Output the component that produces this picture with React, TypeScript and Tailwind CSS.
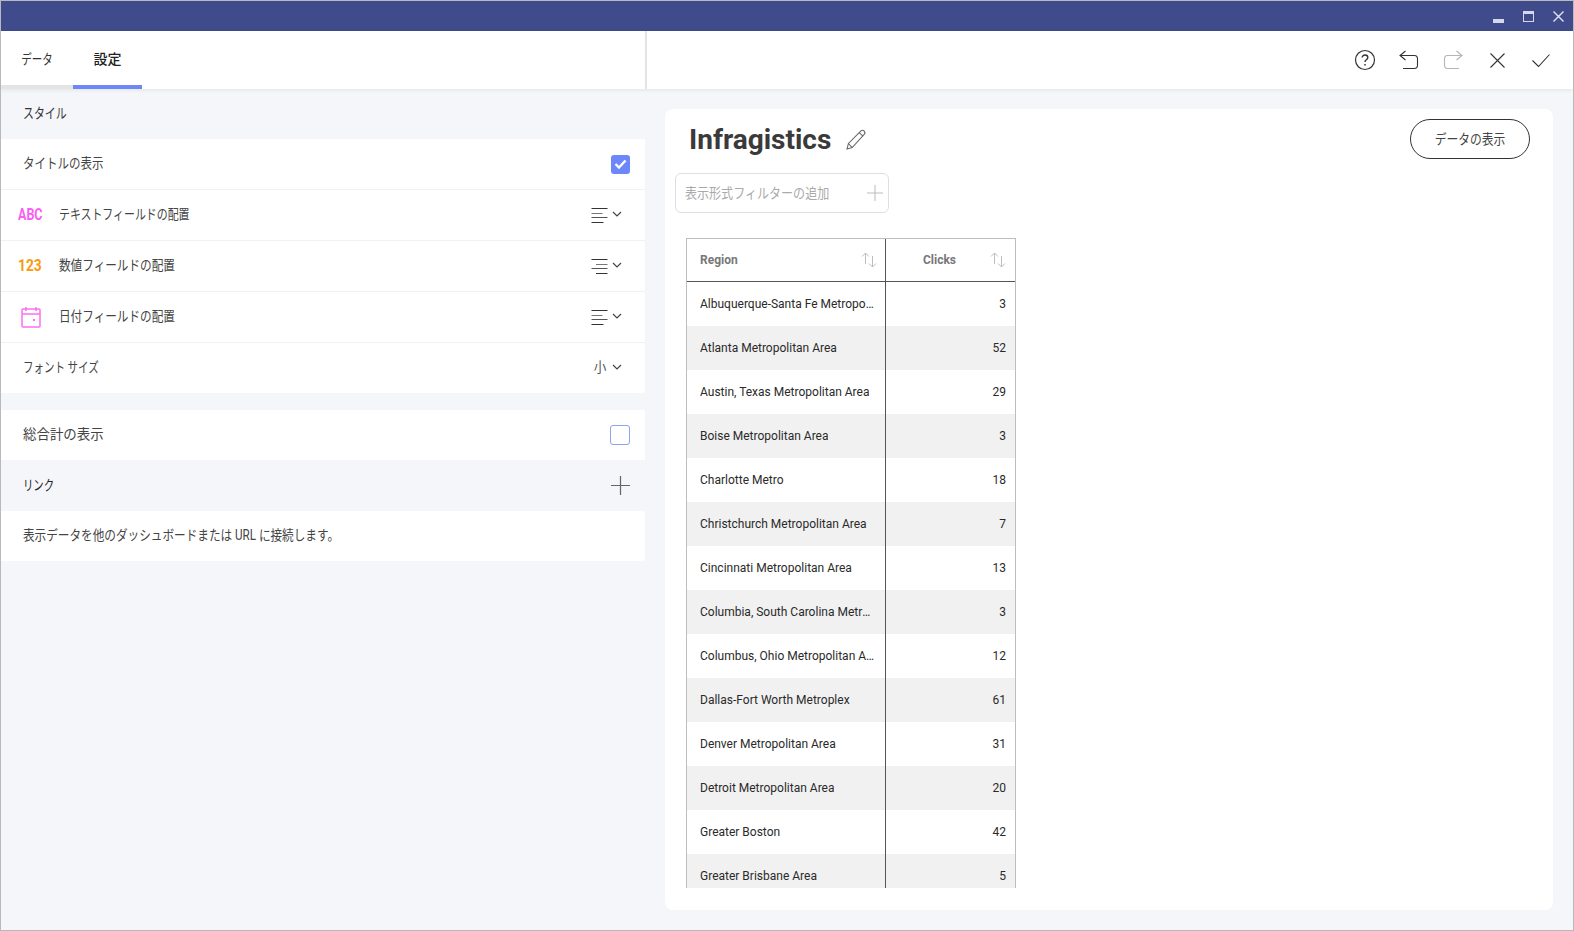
import React from 'react'

const rows: [string, number][] = [
  ['Albuquerque-Santa Fe Metropolitan Area', 3],
  ['Atlanta Metropolitan Area', 52],
  ['Austin, Texas Metropolitan Area', 29],
  ['Boise Metropolitan Area', 3],
  ['Charlotte Metro', 18],
  ['Christchurch Metropolitan Area', 7],
  ['Cincinnati Metropolitan Area', 13],
  ['Columbia, South Carolina Metropolitan Area', 3],
  ['Columbus, Ohio Metropolitan Area', 12],
  ['Dallas-Fort Worth Metroplex', 61],
  ['Denver Metropolitan Area', 31],
  ['Detroit Metropolitan Area', 20],
  ['Greater Boston', 42],
  ['Greater Brisbane Area', 5],
]

function Chevron() {
  return (
    <svg width="10" height="6" viewBox="0 0 10 6" fill="none" stroke="#444" strokeWidth="1.2" className="mb-[2px]">
      <path d="M1 1l4 4 4-4" />
    </svg>
  )
}

function AlignIcon({ kind }: { kind: 'left' | 'right' }) {
  return (
    <svg width="17" height="16" viewBox="0 0 17 16" stroke="#333" strokeWidth="1" className="shrink-0">
      <path d="M0.5 1.5h16" />
      {kind === 'left' ? <path d="M0.5 6.5h11" stroke="#777" /> : <path d="M5 6.5h11.5" stroke="#777" />}
      <path d="M0.5 10.5h16" stroke="#555" />
      {kind === 'left' ? <path d="M0.5 15.5h12" /> : <path d="M5 15.5h11.5" />}
    </svg>
  )
}

function SortIcon() {
  return (
    <svg width="16" height="16" viewBox="0 0 16 16" fill="none" stroke="#bdbdbd" strokeWidth="1">
      <path d="M4.500 12V1M1 4.500l3.500-3.500 3.500 3.500" />
      <path d="M11.500 4v11M8 11.500l3.500 3.500 3.500-3.500" />
    </svg>
  )
}

function PlusIcon({ color, size }: { color: string; size: number }) {
  return (
    <svg width={size} height={size} viewBox="0 0 20 20" stroke={color} strokeWidth="1.3">
      <path d="M10 0v20M0 10h20" />
    </svg>
  )
}

function SettingRow({
  icon,
  label,
  labelClass,
  right,
  divider = true,
  height = 'h-[51px]',
}: {
  icon?: React.ReactNode
  label: string
  labelClass: string
  right?: React.ReactNode
  divider?: boolean
  height?: string
}) {
  return (
    <div className={`${height} bg-white flex items-center pr-[15px] ${divider ? 'border-b border-[#f0f1f4]' : ''}`}>
      {icon ? <div className="w-[58px] pl-[17px] shrink-0">{icon}</div> : <div className="w-[22px] shrink-0" />}
      <span className={`inline-block origin-left mb-[2px] text-[14px] text-[#444] whitespace-nowrap ${labelClass}`}>{label}</span>
      <div className="ml-auto flex items-center">{right}</div>
    </div>
  )
}

function AlignPicker({ kind }: { kind: 'left' | 'right' }) {
  return (
    <div className="flex items-center gap-[4px] pr-[8px]">
      <AlignIcon kind={kind} />
      <Chevron />
    </div>
  )
}

export default function App() {
  return (
    <div
      className="w-[1574px] h-[931px] flex flex-col overflow-hidden border border-[#b9b9b9] bg-[#f5f6fa] text-[#333]"
      style={{ fontFamily: 'Roboto, "Noto Sans CJK JP", sans-serif' }}
    >
      {/* title bar */}
      <div className="h-[30px] shrink-0 bg-[#3f4b8b] flex items-center justify-end pr-[9px] gap-[19px]">
        <div className="w-[11px] h-[4px] bg-[#d5d8e8] mt-[9px]" />
        <div className="w-[11px] h-[11px] border border-t-[3px] border-[#d5d8e8]" />
        <svg width="11" height="11" viewBox="0 0 11 11" stroke="#e4e6f0" strokeWidth="1.4">
          <path d="M0.5 0.5l10 10M10.5 0.5l-10 10" />
        </svg>
      </div>

      {/* toolbar */}
      <div className="h-[58px] shrink-0 bg-white flex shadow-[0_1px_4px_rgba(0,0,0,0.08)] relative">
        <div className="w-[646px] border-r-2 border-[#e4e4e4] flex">
          <div className="w-[72px] border-b-4 border-[#e4e4e2] flex items-center justify-center pt-[2px] text-[14px] text-[#333]">
            <span className="inline-block scale-x-[0.75] whitespace-nowrap">データ</span>
          </div>
          <div className="w-[69px] border-b-4 border-[#6c87f9] flex items-center justify-center pt-[2px] text-[14px] text-[#222] font-medium">設定</div>
        </div>
        <div className="flex-1 flex items-center justify-end pr-[10px]">
          <div className="w-[44px] flex justify-center">
            <svg width="22" height="22" viewBox="0 0 22 22" fill="none" stroke="#333" strokeWidth="1.2">
              <circle cx="11" cy="11" r="9.5" />
              <path d="M8.2 8.6c0-1.6 1.3-2.6 2.8-2.6s2.8 1 2.800 2.500c0 2.200-2.800 2.200-2.800 4.400" strokeWidth="1.4" />
              <path d="M11 15v1.6" strokeWidth="1.5" />
            </svg>
          </div>
          <div className="w-[44px] flex justify-center">
            <svg width="20" height="20" viewBox="0 0 20 20" fill="none" stroke="#333" strokeWidth="1.1">
              <path d="M6.500 1L1 5.500l5.500 4.500M1 5.500h14.500c2 0 3 1.500 3 3.500v6c0 2-1 3.500-3 3.500H4" />
            </svg>
          </div>
          <div className="w-[44px] flex justify-center">
            <svg width="20" height="20" viewBox="0 0 20 20" fill="none" stroke="#b5b5b5" strokeWidth="1.1">
              <path d="M13.500 1L19 5.500l-5.500 4.500M19 5.500H4.500c-2 0-3 1.500-3 3.500v6c0 2 1 3.500 3 3.500H16" />
            </svg>
          </div>
          <div className="w-[44px] flex justify-center">
            <svg width="15" height="15" viewBox="0 0 15 15" stroke="#333" strokeWidth="1.1">
              <path d="M0.500 0.500l14 14M14.500 0.500l-14 14" />
            </svg>
          </div>
          <div className="w-[44px] flex justify-center">
            <svg width="18" height="13" viewBox="0 0 18 13" fill="none" stroke="#333" strokeWidth="1.1">
              <path d="M0.500 6.500l6 6L17.500 0.500" />
            </svg>
          </div>
        </div>
      </div>

      <div className="flex-1 flex min-h-0">
        {/* settings panel */}
        <div className="w-[644px] shrink-0">
          <div className="h-[50px] flex items-center pl-[22px] text-[14px] text-[#333]">
            <span className="inline-block origin-left mb-[2px] scale-x-[0.78] whitespace-nowrap">スタイル</span>
          </div>
          <SettingRow
            label="タイトルの表示"
            labelClass="scale-x-[0.82]"
            right={
              <div className="w-[19px] h-[19px] rounded-[3px] bg-[#6c87f9] flex items-center justify-center">
                <svg width="13" height="10" viewBox="0 0 13 10" fill="none" stroke="#fff" strokeWidth="2.4">
                  <path d="M1.500 5l3.500 3.500L11.500 1.500" />
                </svg>
              </div>
            }
          />
          <SettingRow
            icon={<span className="inline-block origin-left scale-x-[0.78] text-[16px] font-bold text-[#f95ff0]">ABC</span>}
            label="テキストフィールドの配置"
            labelClass="scale-x-[0.78]"
            right={<AlignPicker kind="left" />}
          />
          <SettingRow
            icon={<span className="inline-block origin-left scale-x-[0.86] text-[16px] font-bold text-[#f99a10]">123</span>}
            label="数値フィールドの配置"
            labelClass="scale-x-[0.83]"
            right={<AlignPicker kind="right" />}
          />
          <SettingRow
            icon={
              <svg width="20" height="22" viewBox="0 0 20 22" fill="none" stroke="#fb6ff0" strokeWidth="1.5" className="ml-[3px]">
                <rect x="1" y="3" width="18" height="18" rx="1" />
                <path d="M1 8h18M5 1v4M15 1v4" />
                <rect x="12" y="13" width="2" height="2" fill="#fb6ff0" stroke="none" />
              </svg>
            }
            label="日付フィールドの配置"
            labelClass="scale-x-[0.83]"
            right={<AlignPicker kind="left" />}
          />
          <SettingRow
            label="フォント サイズ"
            labelClass="scale-x-[0.75]"
            divider={false}
            height="h-[50px]"
            right={
              <div className="flex items-center gap-[5px] pr-[8px] text-[14px] text-[#555]">
                <span className="inline-block mb-[2px] scale-x-[0.9]">小</span>
                <Chevron />
              </div>
            }
          />
          <div className="h-[17px]" />
          <SettingRow
            label="総合計の表示"
            labelClass="scale-x-[0.96]"
            divider={false}
            height="h-[50px]"
            right={<div className="w-[20px] h-[20px] rounded-[3px] border border-[#8ea3f5] bg-white" />}
          />
          <div className="h-[51px] flex items-center justify-between pl-[22px] pr-[15px] text-[14px] text-[#222]">
            <span className="inline-block origin-left scale-x-[0.74] whitespace-nowrap">リンク</span>
            <PlusIcon color="#666" size={19} />
          </div>
          <div className="h-[50px] bg-white flex items-center pl-[22px] text-[14px] text-[#444]">
            <span className="inline-block origin-left mb-[2px] scale-x-[0.83] whitespace-nowrap">表示データを他のダッシュボードまたは URL に接続します。</span>
          </div>
        </div>

        {/* preview */}
        <div className="flex-1 min-w-0 px-[20px] pt-[20px] pb-[20px]">
          <div className="h-full bg-white rounded-[8px] flex flex-col pl-[10px]">
            <div className="h-[64px] shrink-0 flex items-start justify-between pr-[23px] pt-[10px]">
              <div className="flex items-center pl-[14px] gap-[15px] h-[40px] pt-[1px]">
                <span className="text-[28px] font-bold text-[#3a3a3a] leading-none">Infragistics</span>
                <svg width="21" height="21" viewBox="0 0 20 20" fill="none" stroke="#666" strokeWidth="1">
                  <path d="M1 19l1.300-5.200L14 2c1-1 2.400-1 3.300 0s1 2.300 0 3.200L5.900 17.700 1 19zM2.300 13.800l3.600 3.900M12.600 3.400l3.800 3.700" />
                </svg>
              </div>
              <button className="w-[120px] h-[40px] rounded-full border border-[#333] bg-white text-[14px] text-[#444]">
                <span className="inline-block scale-x-[0.84] whitespace-nowrap">データの表示</span>
              </button>
            </div>
            <div className="w-[214px] h-[40px] shrink-0 rounded-[6px] border border-[#dfdfdf] flex items-center justify-between pl-[9px] pr-[5px]">
              <span className="inline-block origin-left scale-x-[0.86] whitespace-nowrap text-[14px] text-[#aaa]">表示形式フィルターの追加</span>
              <PlusIcon color="#bdbdbd" size={16} />
            </div>
            <div className="w-[330px] h-[650px] mt-[25px] ml-[11px] overflow-hidden border-x border-t border-[#bdbdbd] flex flex-col">
              <div className="h-[43px] shrink-0 flex border-b border-[#555] text-[12px] font-bold text-[#777]">
                <div className="w-[199px] shrink-0 border-r border-[#555] flex items-center justify-between pl-[13px] pr-[8px]">
                  Region
                  <SortIcon />
                </div>
                <div className="flex-1 flex items-center justify-between pl-[37px] pr-[9px]">
                  Clicks
                  <SortIcon />
                </div>
              </div>
              {rows.map(([region, clicks], i) => (
                <div key={region} className={`h-[44px] shrink-0 flex text-[12px] text-[#2a2a2a] ${i % 2 ? 'bg-[#f1f1f1]' : 'bg-white'}`}>
                  <div className="w-[199px] shrink-0 border-r border-[#555] flex items-center pl-[13px] pr-[10px] min-w-0">
                    <span className="truncate">{region}</span>
                  </div>
                  <div className="flex-1 flex items-center justify-end pr-[9px]">{clicks}</div>
                </div>
              ))}
            </div>
          </div>
        </div>
      </div>
    </div>
  )
}
